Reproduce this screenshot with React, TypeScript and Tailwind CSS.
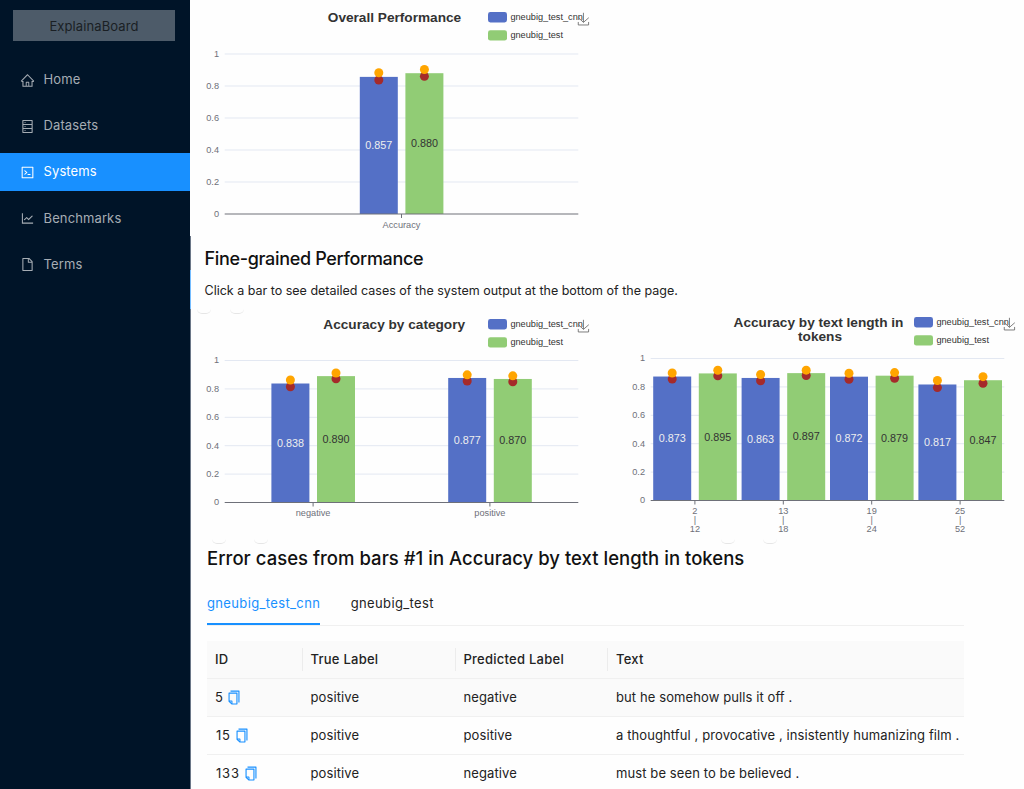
import React from 'react';
import {
  AiOutlineCode, AiOutlineCopy, AiOutlineDatabase, AiOutlineFile, AiOutlineHome, AiOutlineLineChart
} from 'react-icons/ai';

interface Bar {
  value: number;
  high: number;
  low: number;
}

interface Category {
  label: string[];
  bars: [Bar, Bar];
}

interface ChartProps {
  title: string[];
  titleX: number;
  height: number;
  // y of the value 1 and of the value 0
  top: number;
  bottom: number;
  categories: Category[];
}

const LEFT = 34.7;
const RIGHT = 388.3;
const BAR_WIDTH = 38;
const SYSTEMS = ['gneubig_test_cnn', 'gneubig_test'];
const COLORS = ['#5470c6', '#91cc75'];
const TICKS = [0, 0.2, 0.4, 0.6, 0.8, 1];

const bar = (value: number, high: number, low: number): Bar => ({ value, high, low });

const overall: Category[] = [
  { label: ['Accuracy'], bars: [bar(0.857, 0.8825, 0.8375), bar(0.88, 0.903, 0.8605)] },
];

const byCategory: Category[] = [
  { label: ['negative'], bars: [bar(0.838, 0.863, 0.815), bar(0.89, 0.912, 0.871)] },
  { label: ['positive'], bars: [bar(0.877, 0.899, 0.856), bar(0.87, 0.892, 0.85)] },
];

const byLength: Category[] = [
  { label: ['2', '|', '12'], bars: [bar(0.873, 0.898, 0.855), bar(0.895, 0.917, 0.878)] },
  { label: ['13', '|', '18'], bars: [bar(0.863, 0.887, 0.843), bar(0.897, 0.918, 0.88)] },
  { label: ['19', '|', '24'], bars: [bar(0.872, 0.896, 0.854), bar(0.879, 0.901, 0.861)] },
  { label: ['25', '|', '52'], bars: [bar(0.817, 0.845, 0.795), bar(0.847, 0.872, 0.826)] },
];

const BarChart: React.FC<ChartProps> = ({ title, titleX, height, top, bottom, categories }) => {
  const y = (v: number) => bottom - v * (bottom - top);
  const step = (RIGHT - LEFT) / categories.length;

  return (
    <svg width="402" height={height} className="block shrink-0 font-['Liberation_Sans',sans-serif]">
      {title.map((line, i) => (
        <text key={line} x={titleX + i * 1.5} y={22.4 + i * 14} textAnchor="middle" fontSize="13.65" fontWeight="bold" fill="#333">{line}</text>
      ))}

      {SYSTEMS.map((name, i) => (
        <g key={name}>
          <rect x="298" y={12 + i * 18.2} width="19" height="10.4" rx="2.4" fill={COLORS[i]} />
          <text x="320.4" y={20 + i * 18.2} fontSize="9.2" fill="#333">{name}</text>
        </g>
      ))}

      <path
        transform="translate(387.3 12.8) scale(0.21)"
        d="M4.7,22.9L29.3,45.5L54.7,23.4M4.6,43.6L4.6,58L53.8,58L53.8,43.6M29.2,45.1L29.2,0"
        fill="none" stroke="#666" strokeWidth="4"
      />

      {TICKS.map((t) => (
        <g key={t}>
          {t > 0 && <line x1={LEFT} x2={RIGHT} y1={y(t)} y2={y(t)} stroke="#e3e8f2" />}
          <text x="29" y={y(t) + 2.8} textAnchor="end" fontSize="9.2" fill="#6e7079">{t}</text>
        </g>
      ))}

      {categories.map((c, i) => {
        const center = LEFT + step * (i + 0.5);
        return (
          <g key={c.label.join('')}>
            {c.bars.map((b, k) => (
              <rect key={k} x={center + (k ? 3.9 : -41.7)} y={y(b.value)} width={BAR_WIDTH} height={bottom - y(b.value)} fill={COLORS[k]} />
            ))}
            {c.bars.map((b, k) => {
              const x = center + (k ? 22.9 : -22.7);
              return (
                <g key={k}>
                  <circle cx={x} cy={y(b.low)} r="4.5" fill="#a52a2a" />
                  <circle cx={x} cy={y(b.high)} r="4.5" fill="orange" />
                  <text x={x} y={(y(b.value) + bottom) / 2 + 3.6} textAnchor="middle" fontSize="10.8" fill={k ? '#333' : '#eee'}>
                    {b.value.toFixed(3)}
                  </text>
                </g>
              );
            })}
            <line x1={center} x2={center} y1={bottom} y2={bottom + 4} stroke="#6e7079" />
            {c.label.map((line, n) => (
              <text key={n} x={center} y={bottom + 13.6 + n * 9} textAnchor="middle" fontSize="9.2" fill="#6e7079">{line}</text>
            ))}
          </g>
        );
      })}
      <line x1={LEFT} x2={RIGHT} y1={bottom} y2={bottom} stroke="#6e7079" />
    </svg>
  );
};

const menu = [
  { label: 'Home', icon: AiOutlineHome },
  { label: 'Datasets', icon: AiOutlineDatabase },
  { label: 'Systems', icon: AiOutlineCode },
  { label: 'Benchmarks', icon: AiOutlineLineChart },
  { label: 'Terms', icon: AiOutlineFile },
];

const Sidebar: React.FC = () => (
  <aside className="w-[190px] shrink-0 bg-[#001428]">
    <div className="ml-[13px] mt-[10px] w-[162px] h-[31px] bg-[#4d5b69] text-[#1a1f24] text-[13px] tracking-[0.1px] flex items-center justify-center">
      <span className="translate-y-[0.5px]">ExplainaBoard</span>
    </div>
    <nav className="mt-[19.5px] flex flex-col gap-2">
      {menu.map(({ label, icon: Icon }) => (
        <a
          key={label}
          className={`h-[38.1px] pt-px pl-[19.5px] flex items-center gap-[9px] text-[13px] tracking-[0.12px] ${
            label === 'Systems' ? 'bg-[#1890ff] text-white' : 'text-[#a6adb4]'
          }`}
        >
          <Icon size={15} />
          {label}
        </a>
      ))}
    </nav>
  </aside>
);

const rows = [
  { id: 5, label: 'positive', predicted: 'negative', text: 'but he somehow pulls it off .' },
  { id: 15, label: 'positive', predicted: 'positive', text: 'a thoughtful , provocative , insistently humanizing film .' },
  { id: 133, label: 'positive', predicted: 'negative', text: 'must be seen to be believed .' },
];

const headers = ['ID', 'True Label', 'Predicted Label', 'Text'];

const CaseTable: React.FC = () => (
  <div className="mt-[15px] w-[757px] text-[13px] tracking-[0.1px]">
    <div className="grid grid-cols-[95.5px_153px_152.5px_1fr] h-[38px] items-center bg-[#fafafa] border-b border-[#f0f0f0] font-medium tracking-[0.25px]">
      {headers.map((h, i) => (
        <div key={h} className={`pl-2 h-[23px] flex items-center ${i > 0 ? '-ml-px border-l border-[#ececec]' : ''}`}>{h}</div>
      ))}
    </div>
    {rows.map((r) => (
      <div
        key={r.id}
        className={`grid grid-cols-[95.5px_153px_152.5px_1fr] h-[38px] items-center border-b border-[#f0f0f0] ${r.id === 5 ? 'bg-[#fafafa]' : ''}`}
      >
        <div className={`flex items-center tracking-[0.8px] ${r.id === 5 ? 'pl-2 gap-0.5' : 'pl-[9px] gap-[3px]'}`}>
          {r.id}
          <AiOutlineCopy size={16} className="text-[#1890ff] -translate-y-[0.5px]" />
        </div>
        <div className="pl-2">{r.label}</div>
        <div className="pl-2">{r.predicted}</div>
        <div className="pl-2 whitespace-nowrap">{r.text}</div>
      </div>
    ))}
  </div>
);

// lower rims of the round carousel buttons, cut off by the panel above
const Rims: React.FC<{ className: string }> = ({ className }) => (
  <div className={`absolute flex ${className}`}>
    <span className="w-[14px] h-[5px] rounded-b-full border-b border-[#e6e6e6]" />
    <span className="w-[14px] h-[5px] rounded-b-full border-b border-[#e6e6e6]" />
  </div>
);

export default function App() {
  return (
    <div className="flex w-[1024px] h-[789px] overflow-hidden bg-[#fefefe] text-[#222] font-['Inter',sans-serif]">
      <Sidebar />
      <main className="relative flex-1 min-w-0">
        <div className="absolute left-0 top-[236px] w-px h-[553px] bg-[#6b7788]" />
        <div className="absolute left-0 top-[270px] w-px h-[39px] bg-[#74bcff]" />
        <Rims className="left-[7px] top-[309px] gap-[19px]" />
        <Rims className="left-[22px] top-[538.5px] gap-[28px]" />
        <Rims className="left-[531px] top-[538.5px] gap-[28px]" />

        <BarChart title={['Overall Performance']} titleX={204.5} height={240} top={54} bottom={214} categories={overall} />

        <h2 className="ml-[14.5px] mt-[6px] h-[26px] leading-[26px] text-[18px] tracking-[-0.33px] font-medium text-[#111]">Fine-grained Performance</h2>
        <p className="ml-[14.5px] mt-[9px] h-5 leading-5 text-[12.5px]">
          Click a bar to see detailed cases of the system output at the bottom of the page.
        </p>

        <div className="mt-[6px] h-[237px] flex gap-6">
          <BarChart title={['Accuracy by category']} titleX={204.2} height={237} top={53.5} bottom={195.5} categories={byCategory} />
          <div className="-mt-[2.5px]">
            <BarChart title={['Accuracy by text length in', 'tokens']} titleX={202.5} height={237} top={53.5} bottom={195.5} categories={byLength} />
          </div>
        </div>

        <section className="ml-[17px]">
          <h2 className="h-[27px] leading-[28px] text-[18.5px] tracking-[0.025px] font-medium text-[#111]">
            Error cases from bars #1 in Accuracy by text length in tokens
          </h2>
          <div className="mt-[13px] w-[757px] h-[42px] flex gap-[30.5px] border-b border-[#f0f0f0] text-[13px] tracking-[0.36px]">
            <div className="h-[41px] pt-[10px] border-b-2 border-[#1890ff] text-[#1890ff]">gneubig_test_cnn</div>
            <div className="pt-[10px]">gneubig_test</div>
          </div>
          <CaseTable />
        </section>
      </main>
    </div>
  );
}
